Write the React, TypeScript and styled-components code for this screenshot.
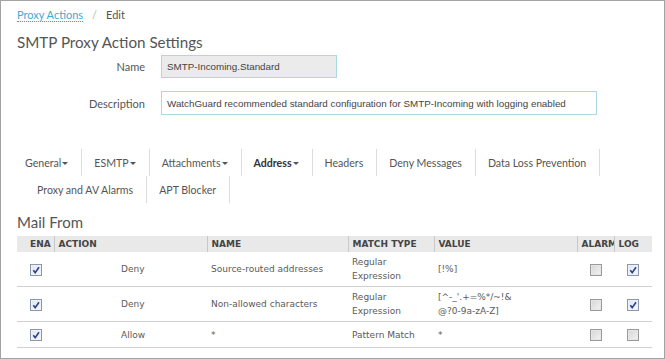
import React from "react";
import styled, { createGlobalStyle } from "styled-components";

const Global = createGlobalStyle`
  html, body { margin: 0; padding: 0; background: #fff; }
  body { font-family: Lato, "Open Sans", sans-serif; }
  * { box-sizing: border-box; }
`;

const Frame = styled.div`
  width: 665px;
  height: 359px;
  border: 1px solid #a3a3a3;
  overflow: hidden;
  padding: 0 12px 0 16px;
  background: #fff;
`;

const Crumbs = styled.nav`
  display: flex;
  align-items: center;
  gap: 9px;
  padding-top: 6px;
  height: 21px;
  font-size: 11px;
  line-height: 13px;
  color: #777;
`;

const CrumbLink = styled.a`
  color: #3aaecb;
  text-decoration: none;
  border-bottom: 1px dotted #3aaecb;
`;

const CrumbSep = styled.span`
  color: #b5b5b5;
`;

const CrumbCurrent = styled.span`
  color: #555;
`;

const Title = styled.h1`
  margin: 10px 0 0;
  font-size: 15.2px;
  line-height: 20px;
  font-weight: 400;
  color: #555;
`;

const Form = styled.div`
  display: grid;
  grid-template-columns: 128px 1fr;
  column-gap: 16px;
  row-gap: 13px;
  margin-top: 3px;
  align-items: center;
`;

const Label = styled.label`
  text-align: right;
  font-size: 11px;
  color: #555;
`;

const Field = styled.input<{ $w: number; $h: number; $grey?: boolean }>`
  width: ${(p) => p.$w}px;
  height: ${(p) => p.$h}px;
  border: 1px solid #a9d9e3;
  background: ${(p) => (p.$grey ? "#ebebeb" : "#fff")};
  font-family: "Liberation Sans", Arial, sans-serif;
  font-size: 9.8px;
  color: #444;
  padding: 0 5px;
  margin: 0;
  outline: none;
`;

const Tabs = styled.div`
  margin-top: 34px;
  margin-left: -4px;
`;

const TabRow = styled.div<{ $indent?: number }>`
  display: flex;
  height: 27px;
  padding-left: ${(p) => p.$indent ?? 0}px;
`;

const Tab = styled.div<{ $active?: boolean }>`
  display: flex;
  align-items: center;
  padding: 0 13px 0 12px;
  border-right: 1px solid #dcdcdc;
  font-size: 10.6px;
  color: ${(p) => (p.$active ? "#333" : "#555")};
  font-weight: ${(p) => (p.$active ? 700 : 400)};
  white-space: nowrap;
`;

const Caret = styled.span`
  display: inline-block;
  width: 0;
  height: 0;
  margin-left: 1px;
  margin-top: 1px;
  border-left: 3px solid transparent;
  border-right: 3px solid transparent;
  border-top: 3px solid #555;
`;

const Section = styled.h2`
  margin: 10px 0 0;
  font-size: 15px;
  line-height: 18px;
  font-weight: 400;
  color: #555;
`;

const Table = styled.table`
  margin-top: 5px;
  width: 635px;
  border-collapse: collapse;
  table-layout: fixed;
  font-family: "DejaVu Sans", Verdana, sans-serif;
  font-size: 9px;
  color: #5a5a5a;
`;

const Th = styled.th<{ $pl?: number }>`
  background: #e9e9e9;
  text-align: left;
  font-weight: 700;
  color: #444;
  height: 16px;
  padding: 0 4px 0 ${(p) => p.$pl ?? 4}px;
  border-left: 1px solid #c9c9c9;
  white-space: nowrap;
  overflow: hidden;
  &:first-child { border-left: none; }
`;

const Td = styled.td<{ $pl?: number; $center?: boolean }>`
  padding: 3px 4px 3px ${(p) => p.$pl ?? 4}px;
  line-height: 14px;
  height: 26px;
  border-bottom: 1px solid #d0d0d0;
  vertical-align: middle;
  text-align: ${(p) => (p.$center ? "center" : "left")};
`;

const Box = styled.span<{ $on?: boolean }>`
  display: inline-block;
  width: 12px;
  height: 12px;
  vertical-align: middle;
  border: 1px solid ${(p) => (p.$on ? "#8d97ab" : "#9a9a9a")};
  background: ${(p) =>
    p.$on
      ? "linear-gradient(135deg, #dfe6f2, #f7f9fc)"
      : "linear-gradient(135deg, #d6d6d6, #f4f4f4)"};
  box-shadow: inset 0 0 0 1px ${(p) => (p.$on ? "#eef2f8" : "#e6e6e6")};
  position: relative;
`;

const Check = ({ on }: { on: boolean }) => (
  <Box $on={on}>
    {on && (
      <svg width="10" height="10" viewBox="0 0 10 10" style={{ position: "absolute", left: 0, top: 0 }}>
        <path d="M2.3 5.2 L4.2 7.6 L8 2.2" fill="none" stroke="#2b3f8c" strokeWidth="1.6" />
      </svg>
    )}
  </Box>
);

type Row = {
  ena: boolean;
  action: string;
  name: string;
  match: React.ReactNode;
  value: React.ReactNode;
  alarm: boolean;
  log: boolean;
};

const rows: Row[] = [
  {
    ena: true,
    action: "Deny",
    name: "Source-routed addresses",
    match: (
      <>
        Regular
        <br />
        Expression
      </>
    ),
    value: "[!%]",
    alarm: false,
    log: true,
  },
  {
    ena: true,
    action: "Deny",
    name: "Non-allowed characters",
    match: (
      <>
        Regular
        <br />
        Expression
      </>
    ),
    value: (
      <>
        [^-_'.+=%*/~!&amp;
        <br />
        @?0-9a-zA-Z]
      </>
    ),
    alarm: false,
    log: true,
  },
  {
    ena: true,
    action: "Allow",
    name: "*",
    match: "Pattern Match",
    value: "*",
    alarm: false,
    log: false,
  },
];

const tabs1 = [
  { t: "General", caret: true },
  { t: "ESMTP", caret: true },
  { t: "Attachments", caret: true },
  { t: "Address", caret: true, active: true },
  { t: "Headers" },
  { t: "Deny Messages" },
  { t: "Data Loss Prevention" },
];
const tabs2 = [{ t: "Proxy and AV Alarms" }, { t: "APT Blocker" }];

export default function App() {
  return (
    <>
      <Global />
      <Frame>
        <Crumbs>
          <CrumbLink>Proxy Actions</CrumbLink>
          <CrumbSep>/</CrumbSep>
          <CrumbCurrent>Edit</CrumbCurrent>
        </Crumbs>
        <Title>SMTP Proxy Action Settings</Title>
        <Form>
          <Label>Name</Label>
          <Field $w={176} $h={23} $grey readOnly value="SMTP-Incoming.Standard" />
          <Label>Description</Label>
          <Field
            $w={436}
            $h={24}
            readOnly
            value="WatchGuard recommended standard configuration for SMTP-Incoming with logging enabled"
          />
        </Form>
        <Tabs>
          <TabRow>
            {tabs1.map((x) => (
              <Tab key={x.t} $active={x.active}>
                {x.t}
                {x.caret && <Caret />}
              </Tab>
            ))}
          </TabRow>
          <TabRow $indent={12}>
            {tabs2.map((x) => (
              <Tab key={x.t}>{x.t}</Tab>
            ))}
          </TabRow>
        </Tabs>
        <Section>Mail From</Section>
        <Table>
          <colgroup>
            <col style={{ width: 37 }} />
            <col style={{ width: 153 }} />
            <col style={{ width: 141 }} />
            <col style={{ width: 86 }} />
            <col style={{ width: 143 }} />
            <col style={{ width: 37 }} />
            <col style={{ width: 38 }} />
          </colgroup>
          <thead>
            <tr>
              <Th $pl={13}>ENA</Th>
              <Th>ACTION</Th>
              <Th>NAME</Th>
              <Th>MATCH TYPE</Th>
              <Th>VALUE</Th>
              <Th>ALARM</Th>
              <Th>LOG</Th>
            </tr>
          </thead>
          <tbody>
            {rows.map((r, i) => (
              <tr key={i}>
                <Td $center>
                  <Check on={r.ena} />
                </Td>
                <Td $pl={67}>{r.action}</Td>
                <Td>{r.name}</Td>
                <Td>{r.match}</Td>
                <Td>{r.value}</Td>
                <Td $center>
                  <Check on={r.alarm} />
                </Td>
                <Td $center>
                  <Check on={r.log} />
                </Td>
              </tr>
            ))}
          </tbody>
        </Table>
      </Frame>
    </>
  );
}
